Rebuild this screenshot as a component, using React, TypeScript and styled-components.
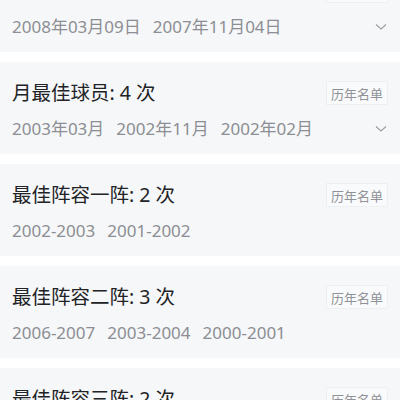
import styled, { createGlobalStyle } from 'styled-components';

const GlobalStyle = createGlobalStyle`
  html, body {
    margin: 0;
    padding: 0;
    background: #ffffff;
    font-family: "Noto Sans", "Noto Sans CJK SC", sans-serif;
    overflow: hidden;
  }
`;

interface Honor {
  title: string;
  count: number;
  items: string[];
  expandable?: boolean;
}

const honors: Honor[] = [
  { title: '周最佳球员', count: 2, items: ['2008年03月09日', '2007年11月04日'], expandable: true },
  { title: '月最佳球员', count: 4, items: ['2003年03月', '2002年11月', '2002年02月'], expandable: true },
  { title: '最佳阵容一阵', count: 2, items: ['2002-2003', '2001-2002'] },
  { title: '最佳阵容二阵', count: 3, items: ['2006-2007', '2003-2004', '2000-2001'] },
  { title: '最佳阵容三阵', count: 2, items: ['2004-2005', '2001-2002'] },
];

// page is scrolled a little: the first card's title sits above the fold
const List = styled.div`
  display: flex;
  flex-direction: column;
  gap: 10px;
  margin-top: -40px;
`;

const Card = styled.div`
  background: #f6f7f9;
  padding: 16px 12px 14px;
  height: 92px;
  box-sizing: border-box;
`;

const TitleRow = styled.div`
  display: flex;
  align-items: center;
  justify-content: space-between;
  height: 30px;
`;

const Title = styled.div`
  font-size: 19.5px;
  color: #222326;
  line-height: 30px;
`;

const Tag = styled.div`
  height: 24px;
  line-height: 24px;
  padding: 0 4px;
  font-size: 13px;
  color: #909297;
  background: #f9fafb;
  border: 1px solid #edeff2;
  box-sizing: border-box;
`;

const DateRow = styled.div`
  display: flex;
  align-items: center;
  gap: 12px;
  margin-top: 9px;
  height: 24px;
`;

const DateItem = styled.span`
  font-size: 17px;
  color: #8c8e93;
  line-height: 24px;
`;

const Chevron = styled.svg`
  margin-left: auto;
  margin-right: 1px;
  width: 12px;
  height: 8px;
`;

export default function App() {
  return (
    <>
      <GlobalStyle />
      <List>
        {honors.map(h => (
          <Card key={h.title}>
            <TitleRow>
              <Title>{h.title}: {h.count} 次</Title>
              <Tag>历年名单</Tag>
            </TitleRow>
            <DateRow>
              {h.items.map(d => (
                <DateItem key={d}>{d}</DateItem>
              ))}
              {h.expandable && (
                <Chevron viewBox="0 0 12 8">
                  <path d="M1 1.5 L6 6 L11 1.5" fill="none" stroke="#9a9ca1" strokeWidth="1.1" />
                </Chevron>
              )}
            </DateRow>
          </Card>
        ))}
      </List>
    </>
  );
}
